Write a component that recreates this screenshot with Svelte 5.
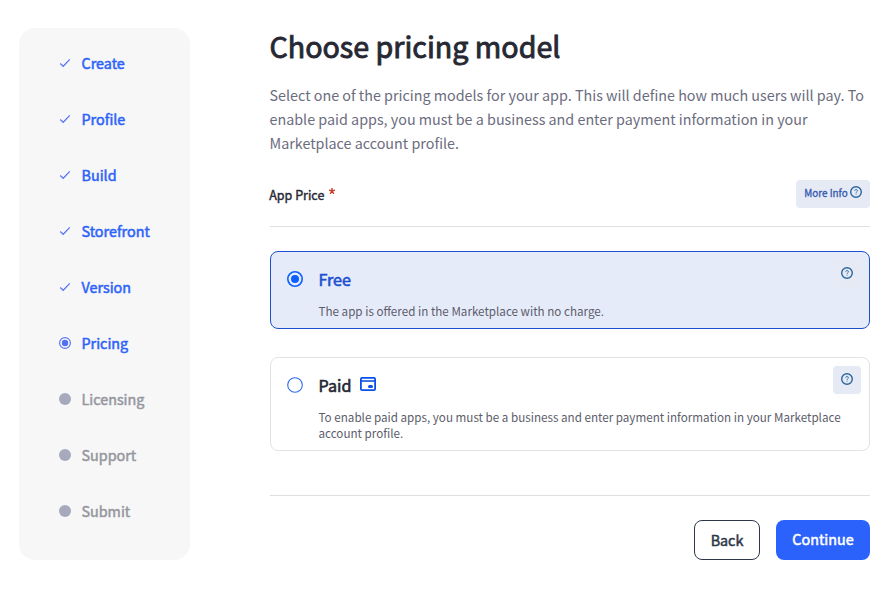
<script>
  const steps = [
    { name: 'Create', state: 'done' },
    { name: 'Profile', state: 'done' },
    { name: 'Build', state: 'done' },
    { name: 'Storefront', state: 'done' },
    { name: 'Version', state: 'done' },
    { name: 'Pricing', state: 'current' },
    { name: 'Licensing', state: 'todo' },
    { name: 'Support', state: 'todo' },
    { name: 'Submit', state: 'todo' }
  ];
  let price = $state('free');
</script>

{#snippet help()}
  <svg class="help" width="12" height="12" viewBox="0 0 12 12" fill="none" stroke="currentColor">
    <circle cx="6" cy="6" r="5.3" stroke-width="1.4" />
    <path d="M4.6 4.7C4.7 3.2 7.5 3.2 7.5 4.7C7.5 5.7 6.1 5.6 6.1 6.8M6.1 7.7V8.6" stroke-width="0.9" />
  </svg>
{/snippet}

{#snippet radio(on)}
  <svg class="radio" width="16" height="16" viewBox="0 0 16 16" fill="none">
    {#if on}
      <circle cx="8" cy="8" r="7.2" stroke="#0b5fff" stroke-width="1.6" />
      <circle cx="8" cy="8" r="4" fill="#0b5fff" />
    {:else}
      <circle cx="8" cy="8" r="7.3" fill="#fff" stroke="#2e6bf0" stroke-width="1.1" />
    {/if}
  </svg>
{/snippet}

<div class="page">
  <nav>
    {#each steps as step}
      <div class="step {step.state}">
        <svg width="12" height="12" viewBox="0 0 12 12" fill="none">
          {#if step.state === 'done'}
            <path d="M1.2 6.6L4.2 9.3L10.8 2.4" stroke="#5d78f2" stroke-width="1.3" />
          {:else if step.state === 'current'}
            <circle cx="6" cy="6" r="5.4" stroke="#5b75f4" stroke-width="1.2" />
            <circle cx="6" cy="6" r="3.2" fill="#5070f6" />
          {:else}
            <circle cx="6" cy="6" r="6" fill="#a7a9bc" />
          {/if}
        </svg>
        <span>{step.name}</span>
      </div>
    {/each}
  </nav>

  <main>
    <h1>Choose pricing model</h1>
    <p class="intro">
      Select one of the pricing models for your app. This will define how much users will pay. To<br />
      enable paid apps, you must be a business and enter payment information in your<br />
      Marketplace account profile.
    </p>
    <div class="field">
      <span class="label">App Price <svg class="star" width="6" height="6" viewBox="0 0 6 6"><path d="M3 0V3M0 2.1L3 3L6 2.1M1.2 5.8L3 3L4.8 5.8" fill="none" stroke="#cf3a26" stroke-width="1.4" /></svg></span>
      <button class="more"><span>More Info</span>{@render help()}</button>
    </div>

    <section class="card free" class:selected={price === 'free'}>
      {@render radio(price === 'free')}
      <div class="body">
        <h2>Free</h2>
        <p>The app is offered in the Marketplace with no charge.</p>
      </div>
      <button class="tip">{@render help()}</button>
    </section>

    <section class="card paid" class:selected={price === 'paid'}>
      {@render radio(price === 'paid')}
      <div class="body">
        <h2>
          Paid
          <svg width="16" height="14" viewBox="0 0 16 14" fill="none">
            <rect x="0.9" y="0.9" width="14.2" height="12.2" rx="1.2" stroke="#0b50e8" stroke-width="1.8" />
            <path d="M1 4H15" stroke="#0b50e8" stroke-width="1.6" />
            <rect x="8" y="8" width="5" height="3" rx="1.5" fill="#0b50e8" />
          </svg>
        </h2>
        <p>To enable paid apps, you must be a business and enter payment information in your Marketplace<br />account profile.</p>
      </div>
      <button class="tip">{@render help()}</button>
    </section>

    <footer>
      <button class="back">Back</button>
      <button class="continue">Continue</button>
    </footer>
  </main>
</div>

<style>
  :global(body) { background: #fff; }
  .page {
    display: flex;
    gap: 80px;
    box-sizing: border-box;
    width: 896px;
    height: 589px;
    padding: 28px 26px 0 19px;
    font-family: "Noto Sans CJK SC", "Noto Sans", sans-serif;
    color: #272833;
  }
  svg { display: block; flex: none; }
  h1, h2, p { margin: 0; font-weight: 400; white-space: nowrap; }
  button { font: inherit; border: 0; padding: 0; margin: 0; box-sizing: border-box; }
  nav {
    box-sizing: border-box;
    width: 171px;
    height: 532px;
    padding: 23px 0 0 40px;
    border-radius: 16px;
    background: #f7f7f7;
    flex: none;
  }
  .step {
    display: flex;
    align-items: center;
    gap: 10.5px;
    height: 24px;
    margin-bottom: 32px;
    font-size: 14.35px;
    line-height: 24px;
    color: #2b62fb;
    -webkit-text-stroke: 0.5px currentColor;
  }
  .todo { color: #96979f; }
  main { width: 600px; display: flex; flex-direction: column; }
  h1 {
    margin: -2px 0 0 -0.5px;
    font-size: 28.65px;
    line-height: 40px;
    -webkit-text-stroke: 0.9px currentColor;
  }
  .intro {
    margin: 17px 0 0 -0.5px;
    font-size: 14.33px;
    line-height: 24px;
    color: #6b6c7e;
  }
  .field {
    display: flex;
    justify-content: space-between;
    align-items: center;
    box-sizing: border-box;
    height: 47px;
    margin-top: 25px;
    padding-bottom: 18px;
    border-bottom: 1px solid #e0e0e3;
  }
  .label {
    display: flex;
    gap: 5px;
    margin: 2px 0 0 -0.8px;
    font-size: 12.53px;
    line-height: 20px;
    -webkit-text-stroke: 0.4px currentColor;
  }
  .star { margin-top: 3px; }
  .more {
    display: flex;
    gap: 2px;
    width: 74px;
    height: 28px;
    padding: 6px 0 0 8px;
    border-radius: 4px;
    background: #e6eaf5;
    color: #3159b0;
    font-size: 9.9px;
    line-height: 15px;
    -webkit-text-stroke: 0.3px currentColor;
  }
  .more span { width: 44px; white-space: nowrap; }
  .help { color: #2a659d; }
  .card {
    display: flex;
    box-sizing: border-box;
    padding: 19px 8px 0 16px;
    border: 1px solid #e2e2e4;
    border-radius: 8px;
  }
  .card.selected { background: #e6ebfa; border-color: #1d50d0; }
  .free { height: 78px; margin-top: 24px; }
  .paid { height: 94px; margin-top: 28px; }
  .body { flex: 1; margin: -2px 0 0 15.5px; width: 0; }
  h2 {
    display: flex;
    align-items: center;
    gap: 9px;
    font-size: 16.12px;
    line-height: 20px;
    -webkit-text-stroke: 0.6px currentColor;
  }
  h2 svg { margin-top: -2px; }
  .selected h2 { color: #1d50d0; }
  .body p {
    margin-top: 14px;
    font-size: 11.65px;
    line-height: 16px;
    color: #5c5d6b;
  }
  .tip {
    display: flex;
    justify-content: center;
    width: 28px;
    height: 28px;
    margin-top: -11px;
    padding-top: 7px;
    border-radius: 4px;
    background: #e6eaf5;
  }
  footer {
    display: flex;
    justify-content: flex-end;
    gap: 16px;
    margin-top: 44px;
    padding-top: 24px;
    border-top: 1px solid #e0e0e3;
  }
  footer button {
    height: 40px;
    border-radius: 8px;
    font-size: 14.33px;
    line-height: 38px;
    -webkit-text-stroke: 0.5px currentColor;
  }
  .back { width: 66px; background: #fff; border: 1px solid #2d3748; color: #2d3748; }
  .continue { width: 94px; padding-bottom: 2px; background: #2b62fb; color: #fff; }
</style>
